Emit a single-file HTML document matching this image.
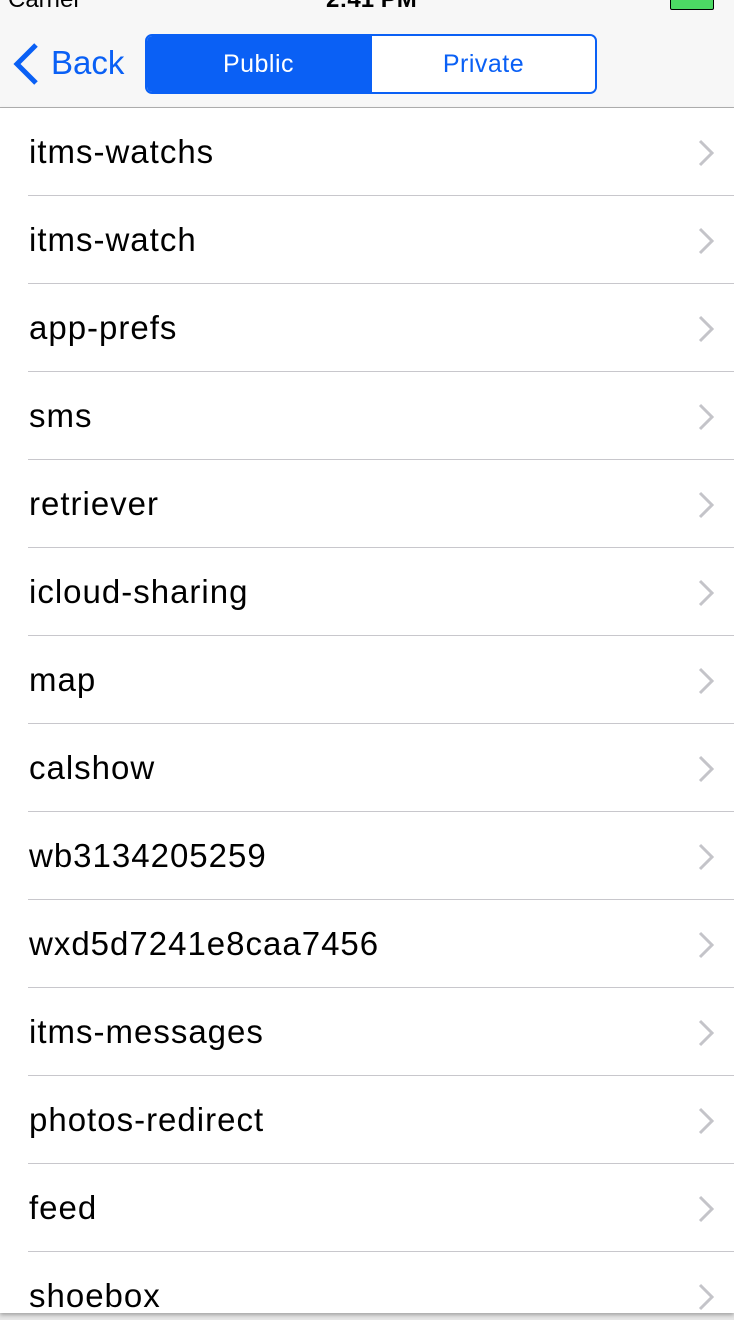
<!DOCTYPE html>
<html><head><meta charset="utf-8"><style>
html,body{margin:0;width:734px;height:1320px;overflow:hidden}
body{background:#e6e6e6;font-family:"Liberation Sans",sans-serif;position:relative}
.nav{position:absolute;left:0;top:0;width:734px;height:107px;background:#f7f7f7;border-bottom:1px solid #b2b2b2}
.sb{position:absolute;top:-14px;font-size:24px;color:#000}
.seg{position:absolute;left:145px;top:34px;width:448px;height:56px;border:2px solid #0a60f5;border-radius:7px;display:flex;overflow:hidden}
.seg div{flex:1;display:flex;align-items:center;justify-content:center;font-size:25px;letter-spacing:0.5px}
.list{position:absolute;left:0;top:108px;width:734px;height:1205px;background:#fff;box-shadow:0 2px 4px rgba(0,0,0,.3)}
.row{height:87px;border-bottom:1px solid #c8c7cc;margin-left:28px;position:relative}
.row span{position:absolute;left:1px;top:25px;font-size:33px;letter-spacing:1px;color:#000}
.row svg{position:absolute;right:20px;top:31px}
</style></head><body>
<div class="nav">
<div class="sb" style="left:8px">Carrier</div>
<div class="sb" style="left:326px;font-weight:bold">2:41 PM</div>
<div style="position:absolute;left:670px;top:-6px;width:42px;height:14px;border:1px solid #000;border-radius:2px;background:#4cd964"></div>
<svg style="position:absolute;left:12px;top:42px" width="28" height="44"><path d="M24 3 L5 22 L24 41" stroke="#0a60f5" stroke-width="5" fill="none"/></svg>
<div style="position:absolute;left:51px;top:44px;font-size:33px;color:#0a60f5">Back</div>
<div class="seg"><div style="background:#0a60f5;color:#fff">Public</div><div style="background:#fff;color:#0a60f5;border-left:2px solid #0a60f5">Private</div></div>
</div>
<div class="list">
<div class="row"><span>itms-watchs</span><svg width="16" height="28"><path d="M2 2 L14 14 L2 26" stroke="#c4c4c9" stroke-width="3" fill="none"/></svg></div>
<div class="row"><span>itms-watch</span><svg width="16" height="28"><path d="M2 2 L14 14 L2 26" stroke="#c4c4c9" stroke-width="3" fill="none"/></svg></div>
<div class="row"><span>app-prefs</span><svg width="16" height="28"><path d="M2 2 L14 14 L2 26" stroke="#c4c4c9" stroke-width="3" fill="none"/></svg></div>
<div class="row"><span>sms</span><svg width="16" height="28"><path d="M2 2 L14 14 L2 26" stroke="#c4c4c9" stroke-width="3" fill="none"/></svg></div>
<div class="row"><span>retriever</span><svg width="16" height="28"><path d="M2 2 L14 14 L2 26" stroke="#c4c4c9" stroke-width="3" fill="none"/></svg></div>
<div class="row"><span>icloud-sharing</span><svg width="16" height="28"><path d="M2 2 L14 14 L2 26" stroke="#c4c4c9" stroke-width="3" fill="none"/></svg></div>
<div class="row"><span>map</span><svg width="16" height="28"><path d="M2 2 L14 14 L2 26" stroke="#c4c4c9" stroke-width="3" fill="none"/></svg></div>
<div class="row"><span>calshow</span><svg width="16" height="28"><path d="M2 2 L14 14 L2 26" stroke="#c4c4c9" stroke-width="3" fill="none"/></svg></div>
<div class="row"><span>wb3134205259</span><svg width="16" height="28"><path d="M2 2 L14 14 L2 26" stroke="#c4c4c9" stroke-width="3" fill="none"/></svg></div>
<div class="row"><span>wxd5d7241e8caa7456</span><svg width="16" height="28"><path d="M2 2 L14 14 L2 26" stroke="#c4c4c9" stroke-width="3" fill="none"/></svg></div>
<div class="row"><span>itms-messages</span><svg width="16" height="28"><path d="M2 2 L14 14 L2 26" stroke="#c4c4c9" stroke-width="3" fill="none"/></svg></div>
<div class="row"><span>photos-redirect</span><svg width="16" height="28"><path d="M2 2 L14 14 L2 26" stroke="#c4c4c9" stroke-width="3" fill="none"/></svg></div>
<div class="row"><span>feed</span><svg width="16" height="28"><path d="M2 2 L14 14 L2 26" stroke="#c4c4c9" stroke-width="3" fill="none"/></svg></div>
<div class="row" style="border:none"><span>shoebox</span><svg width="16" height="28"><path d="M2 2 L14 14 L2 26" stroke="#c4c4c9" stroke-width="3" fill="none"/></svg></div>
</div>
</body></html>
